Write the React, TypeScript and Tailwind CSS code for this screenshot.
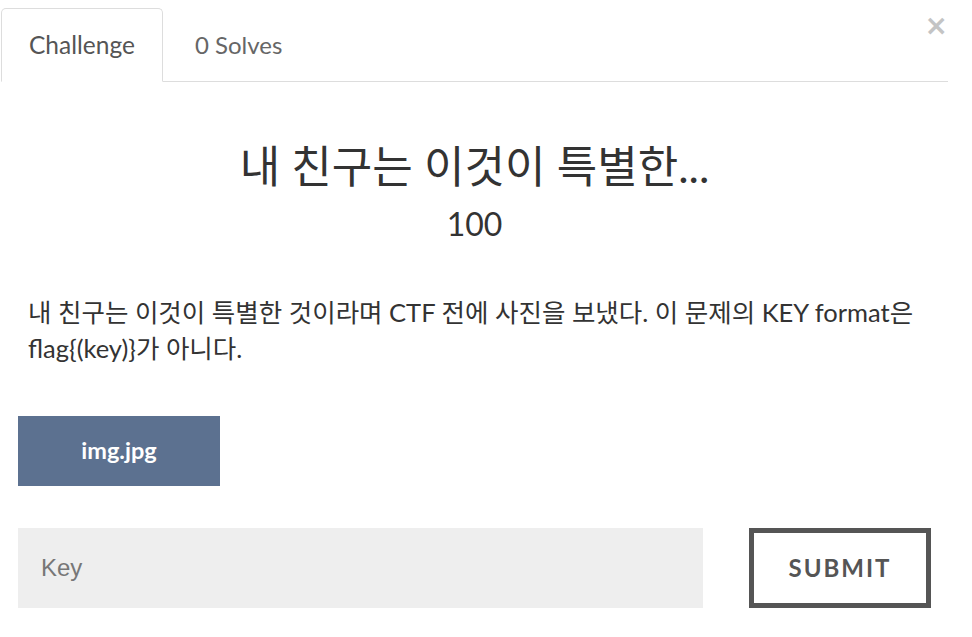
import React from 'react';

const ko = { fontFamily: 'Lato, "Noto Sans CJK KR", sans-serif' };

export default function App() {
  return (
    <div className="relative w-full h-[637px] bg-white text-[#333]" style={ko}>
      {/* close */}
      <button className="absolute right-[24px] top-[12px] text-[28px] leading-none text-[#c4c4c4] font-bold" style={{ fontFamily: '"DejaVu Sans", sans-serif' }}>
        ×
      </button>

      {/* Tabs */}
      <div className="pt-[8px] pl-[1px] mr-[24px]">
        <ul className="flex border-b border-[#ddd]">
          <li className="-mb-px">
            <span className="block px-[27px] py-[18px] text-[24.5px] leading-[36px] text-[#555] bg-white border border-[#ddd] border-b-white rounded-t-[5px]">
              Challenge
            </span>
          </li>
          <li className="-mb-px ml-[4px]">
            <span className="block px-[27px] py-[18px] text-[24px] leading-[36px] text-[#666] border border-transparent">
              0 Solves
            </span>
          </li>
        </ul>
      </div>

      {/* Body */}
      <div className="pl-[18px] pr-[41px]">
        <h3 className="mt-[58px] text-center text-[44px] leading-[52px] text-[#333]">내 친구는 이것이 특별한...</h3>
        <h4 className="mt-[12px] text-center text-[32px] leading-[40px] text-[#333]">100</h4>

        <p className="mt-[50px] pl-[10px] text-[25.5px] leading-[36px] text-[#333]">
          내 친구는 이것이 특별한 것이라며 CTF 전에 사진을 보냈다. 이 문제의 KEY format은 flag{'{'}(key){'}'}가 아니다.
        </p>

        <div className="mt-[50px]">
          <button className="w-[202px] h-[70px] bg-[#5c7190] text-white text-[23.5px] font-bold">img.jpg</button>
        </div>

        <div className="mt-[42px] flex items-stretch">
          <input
            placeholder="Key"
            className="flex-1 h-[80px] bg-[#eee] px-[23px] text-[24px] text-[#333] placeholder:text-[#777] outline-none"
            style={{ fontFamily: '"Liberation Sans", Arial, sans-serif' }}
          />
          <button className="ml-[46px] w-[182px] h-[80px] border-[5px] border-[#555] bg-white text-[#555] text-[24px] font-bold tracking-[2px]">
            SUBMIT
          </button>
        </div>
      </div>
    </div>
  );
}
